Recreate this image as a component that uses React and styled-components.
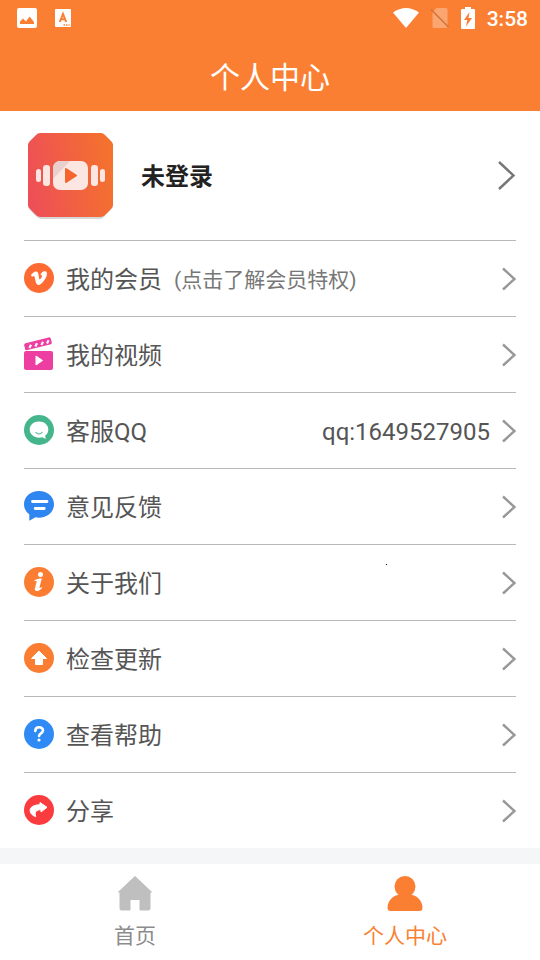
import React, { useState } from 'react';
import styled, { createGlobalStyle } from 'styled-components';

const GlobalStyle = createGlobalStyle`
  * {
    box-sizing: border-box;
  }

  body {
    margin: 0;
    background: #ffffff;
    font-family: Roboto, "Noto Sans CJK SC", sans-serif;
    color: #555555;
  }

  button {
    font-family: inherit;
    color: inherit;
    background: none;
    border: none;
    cursor: pointer;
  }

  svg {
    display: block;
    flex: none;
  }
`;

const Page = styled.div`
  min-height: 100vh;
  display: flex;
  flex-direction: column;
`;

const Header = styled.header`
  background: #fa7f33;
  color: #ffffff;
`;

const StatusBar = styled.div`
  display: flex;
  align-items: center;
  justify-content: space-between;
  height: 36px;
  padding: 0 12px 0 16px;
`;

const StatusGroup = styled.div`
  display: flex;
  align-items: center;
  gap: ${props => props.$gap}px;
`;

const Clock = styled.span`
  padding-top: 2px;
  font-size: 21px;
  font-weight: 500;
  line-height: 24px;
`;

const Title = styled.h1`
  margin: 0;
  padding: 22px 0 13px;
  font-size: 30px;
  font-weight: 400;
  line-height: 40px;
  text-align: center;
`;

const Main = styled.main`
  flex: 1;
  border-bottom: 16px solid #f4f6f8;
`;

const Profile = styled.button`
  display: flex;
  align-items: center;
  gap: 28px;
  width: calc(100% - 48px);
  margin: 0 24px;
  padding: 21px 0 20px 4px;
  border-bottom: 1px solid #b8b8b8;
`;

const UserName = styled.span`
  flex: 1;
  padding-top: 2px;
  color: #222222;
  font-size: 24px;
  font-weight: 700;
  line-height: 36px;
  text-align: left;
`;

const Menu = styled.ul`
  list-style: none;
  margin: 0;
  padding: 0 24px;
`;

const MenuItem = styled.li`
  position: relative;
  border-bottom: 1px solid #b8b8b8;

  &:last-child {
    border-bottom: none;
  }
`;

const MenuButton = styled.button`
  display: flex;
  align-items: center;
  gap: 12px;
  width: 100%;
  padding: 20px 0;
  font-size: 24px;
  line-height: 31px;
  text-align: left;
`;

const Label = styled.span`
  padding-top: 4px;
`;

const Hint = styled(Label)`
  color: #777777;
  font-size: 21px;
`;

const Value = styled(Label)`
  margin-left: auto;
`;

const Push = styled.span`
  flex: 1;
`;

const Speck = styled.i`
  position: absolute;
  top: 19px;
  left: 362px;
  width: 1px;
  height: 1px;
  background: #111111;
`;

const TabBar = styled.nav`
  display: flex;
  background: #ffffff;
`;

const Tab = styled.button`
  flex: 1;
  display: flex;
  flex-direction: column;
  align-items: center;
  gap: 10px;
  padding: 11px 0 8px;
  color: ${props => (props.$active ? '#fa7f33' : '#8c8c8c')};
  font-size: 21px;
  line-height: 31px;
`;

const Chevron = ({ large }) =>
  large ? (
    <svg width="18" height="30" viewBox="0 0 18 30" fill="none" stroke="#777777" strokeWidth="2.4">
      <path d="M1 1 15.500 14.500 1 28" />
    </svg>
  ) : (
    <svg width="14" height="24" viewBox="0 0 14 24" fill="none" stroke="#989898" strokeWidth="2.4">
      <path d="M1 1.500 12.500 12 1 22.500" />
    </svg>
  );

const Avatar = () => (
  <svg width="85" height="88" viewBox="0 0 85 88">
    <defs>
      <linearGradient id="avatarFill" x1="0" y1="0.6" x2="1" y2="0.4">
        <stop offset="0" stopColor="#ee4f57" />
        <stop offset="1" stopColor="#f4722d" />
      </linearGradient>
    </defs>
    <path d="M12 3h61l12 9v63q-6 8-12 12H12Q5 83 0 75V12z" fill="#d9d6d6" />
    <path d="M12 1h61q2 0 4 2l6 6q2 2 2 4v60q0 2-2 4l-7 7q-2 1-4 1H13q-2 0-4-1l-7-7q-2-2-2-4V13q0-2 2-4l6-6q2-2 4-2z" fill="url(#avatarFill)" />
    <g fill="#fbe6e2">
      <rect x="8" y="37" width="5" height="13" rx="2.5" />
      <rect x="15" y="33" width="7" height="21" rx="3" />
      <rect x="63" y="33" width="7" height="21" rx="3" />
      <rect x="72" y="37" width="5" height="13" rx="2.5" />
      <rect x="25" y="29" width="35" height="29" rx="7" />
    </g>
    <path d="M25 36a7 7 0 0 1 7-7h10L25 47z" fill="#e9cfcd" />
    <path d="M38 37v13l10-6.500z" fill="#f3642f" stroke="#f3642f" strokeWidth="2" strokeLinejoin="round" />
  </svg>
);

const Badge = ({ color, children }) => (
  <svg width="30" height="31" viewBox="0 0 30 31">
    <circle cx="15" cy="15" r="15" fill={color} />
    {children}
  </svg>
);

const VipIcon = () => (
  <Badge color="#fd6b33">
    <path
      fill="#fff"
      d="M7 11.800c1.800-1.700 3.400-3.200 4.800-3.300 1.600-.1 2.300 1 2.700 3.300.4 2.200.7 4.600 1.300 4.600.6 0 2.100-2.400 2.200-3.500.1-.9-.6-1.100-1.600-.7.900-3 2.600-4.300 4.700-4 1.700.2 2.300 1.600 1.700 4-.8 3.300-5.300 9.600-8 9.700-2.400.1-2.900-2.200-3.500-4.800-.5-2.300-.8-4.200-1.400-4.200-.4 0-1 .3-1.900 1z"
    />
  </Badge>
);

const VideoIcon = () => (
  <svg width="30" height="35" viewBox="0 0 30 35">
    <path d="M1.500 6.200 24.500.4q1.700-.3 2.200 1.200l1.200 4.200q0 1-1 1.400L2.500 13.300q-1 .2-1.300-.8L.2 8.200q-.2-1.600 1.300-2z" fill="#ec3fa1" />
    <path
      d="M7 7.700 5.400 10.900M13 6.200 11.400 9.400M19 4.700 17.400 7.900M24.600 3.200 23 6.400"
      stroke="#fff"
      strokeWidth="2.200"
    />
    <rect y="14" width="29" height="19" rx="2" fill="#ec3fa1" />
    <path d="M12 19v9l6.500-4.500z" fill="#fff" stroke="#fff" strokeLinejoin="round" />
  </svg>
);

const ServiceIcon = () => (
  <Badge color="#45b58c">
    <path d="M15 6.500c5.300 0 9.300 3.500 9.300 8 0 2.700-1.300 4.900-3.200 6.300l.8 3.100-3.600-1.600c-1 .3-2.100.4-3.300.4-5.300 0-9.300-3.600-9.300-8.200s4-8 9.300-8z" fill="#fff" />
    <path d="M12 17.500c1.500 2 4.500 2 6 0" fill="none" stroke="#45b58c" strokeWidth="1.200" strokeLinecap="round" />
  </Badge>
);

const FeedbackIcon = () => (
  <svg width="30" height="31" viewBox="0 0 30 31">
    <path d="M15 0c8.500 0 15 5.800 15 13.300s-6.500 13.400-15 13.400c-1.200 0-2.400-.1-3.500-.4L5.300 29.800V23.300C2 20.900 0 17.400 0 13.300 0 5.800 6.500 0 15 0z" fill="#2f86f1" />
    <path d="M8.500 10.500h14.500M11.200 17.500h9" stroke="#fff" strokeWidth="2.800" strokeLinecap="round" />
  </svg>
);

const AboutIcon = () => (
  <Badge color="#fb7d32">
    <circle cx="16.500" cy="7.500" r="2.500" fill="#fff" />
    <path d="M10.500 13.300c2-1.300 4.400-1.800 7.300-1.800l-2.300 8.700c-.3 1.200.6 1 2.200-.2l.5.700c-1.900 2.200-3.700 3.400-5.500 3.400-1.600 0-2.200-1.200-1.800-2.800l1.700-6.200c.3-1-.4-1.200-2.100-.9z" fill="#fff" />
  </Badge>
);

const UpdateIcon = () => (
  <Badge color="#fb7d32">
    <path d="M15 8l7.500 7.500h-4V21.500h-7v-6h-4z" fill="#fff" stroke="#fff" strokeLinejoin="round" />
  </Badge>
);

const HelpIcon = () => (
  <Badge color="#2f8af5">
    <path d="M11.300 12c0-5 7.700-4.700 7.700-.4 0 2.700-3.900 2.900-3.900 5.400" fill="none" stroke="#fff" strokeWidth="2.600" strokeLinecap="round" />
    <circle cx="15" cy="21" r="1.600" fill="#fff" />
  </Badge>
);

const ShareIcon = () => (
  <Badge color="#fb3c3f">
    <path
      d="M16 7.500 23 12.300 17 17v-2.200c-4.500-.2-6.800 2-5.300 6.900-3.700-1.400-5.600-3.500-5.600-6.200C6.100 12 10 9.800 16 9.800z"
      fill="#fff"
      stroke="#fff"
      strokeLinejoin="round"
    />
  </Badge>
);

const HomeIcon = () => (
  <svg width="36" height="36" viewBox="0 0 36 36">
    <path
      d="M18 1.500 34.500 17H33v16.500q0 1.500-1.500 1.500H23V25.500q0-1-1-1h-8q-1 0-1 1V35H4.500Q3 35 3 33.500V17H1.500z"
      fill="#bfbfbf"
      stroke="#bfbfbf"
      strokeLinejoin="round"
    />
  </svg>
);

const UserIcon = () => (
  <svg width="36" height="36" viewBox="0 0 36 36" fill="#fa7f33">
    <circle cx="18" cy="11.500" r="10.500" />
    <path d="M12 19.500h12c6 1.500 11 5.500 11.500 13q0 3.500-3 3.500h-29q-3 0-3-3.500C1 25 6 21 12 19.500z" />
  </svg>
);

const PictureIcon = () => (
  <svg width="21" height="20" viewBox="0 0 21 20">
    <rect x="1" width="20" height="20" rx="2" fill="#fff" />
    <path d="M4 16v-2.500l3-3 3 3 3.500-5 4.500 5.500v2z" fill="#fa7f33" />
  </svg>
);

const KeyboardIcon = () => (
  <svg width="16" height="18" viewBox="0 0 16 18">
    <rect width="16" height="18" rx="1" fill="#fff" />
    <path d="M4.800 13 8 5l3.200 8M6 10.300h4" fill="none" stroke="#fa7f33" strokeWidth="2" />
    <path d="M8.500 16h6" stroke="#fa7f33" strokeWidth="1.500" strokeDasharray="1.500 1" />
  </svg>
);

const WifiIcon = () => (
  <svg width="26" height="20" viewBox="0 0 26 20">
    <path d="M0 4.500Q13-4.500 26 4.500L13 20z" fill="#fff" />
  </svg>
);

const NoSimIcon = () => (
  <svg width="18" height="20" viewBox="0 0 18 20">
    <path d="M5.500 0H15q1.500 0 1.500 1.500v17q0 1.500-1.500 1.500H3q-1.500 0-1.500-1.500V4z" fill="#fff" opacity="0.3" />
    <path d="M0 1.500 17.500 19" stroke="#d0713a" strokeWidth="1.500" />
  </svg>
);

const BatteryIcon = () => (
  <svg width="14" height="22" viewBox="0 0 14 22">
    <path d="M4 0h6v2h3q1 0 1 1v18q0 1-1 1H1q-1 0-1-1V3q0-1 1-1h3z" fill="#fff" />
    <path d="M8.500 5 3 13h3.300L5 19.500l6-8.500H7.500z" fill="#fa7f33" />
  </svg>
);

const menuItems = [
  { label: '我的会员', hint: '(点击了解会员特权)', icon: VipIcon },
  { label: '我的视频', icon: VideoIcon },
  { label: '客服QQ', value: 'qq:1649527905', icon: ServiceIcon },
  { label: '意见反馈', icon: FeedbackIcon },
  { label: '关于我们', icon: AboutIcon, speck: true },
  { label: '检查更新', icon: UpdateIcon },
  { label: '查看帮助', icon: HelpIcon },
  { label: '分享', icon: ShareIcon },
];

const tabs = [
  { id: 'home', label: '首页', icon: HomeIcon },
  { id: 'user', label: '个人中心', icon: UserIcon },
];

const App = () => {
  const [activeTab, setActiveTab] = useState('user');

  return (
    <>
      <GlobalStyle />
      <Page>
        <Header>
          <StatusBar>
            <StatusGroup $gap={18}>
              <PictureIcon />
              <KeyboardIcon />
            </StatusGroup>
            <StatusGroup $gap={12}>
              <WifiIcon />
              <NoSimIcon />
              <BatteryIcon />
              <Clock>3:58</Clock>
            </StatusGroup>
          </StatusBar>
          <Title>个人中心</Title>
        </Header>

        <Main>
          <Profile type="button">
            <Avatar />
            <UserName>未登录</UserName>
            <Chevron large />
          </Profile>

          <Menu>
            {menuItems.map(({ label, hint, value, icon: Icon, speck }) => (
              <MenuItem key={label}>
                <MenuButton type="button">
                  <Icon />
                  <Label>{label}</Label>
                  {hint && <Hint>{hint}</Hint>}
                  {value ? <Value>{value}</Value> : <Push />}
                  <Chevron />
                </MenuButton>
                {speck && <Speck />}
              </MenuItem>
            ))}
          </Menu>
        </Main>

        <TabBar>
          {tabs.map(({ id, label, icon: Icon }) => (
            <Tab key={id} type="button" $active={activeTab === id} onClick={() => setActiveTab(id)}>
              <Icon />
              <span>{label}</span>
            </Tab>
          ))}
        </TabBar>
      </Page>
    </>
  );
};

export default App;
